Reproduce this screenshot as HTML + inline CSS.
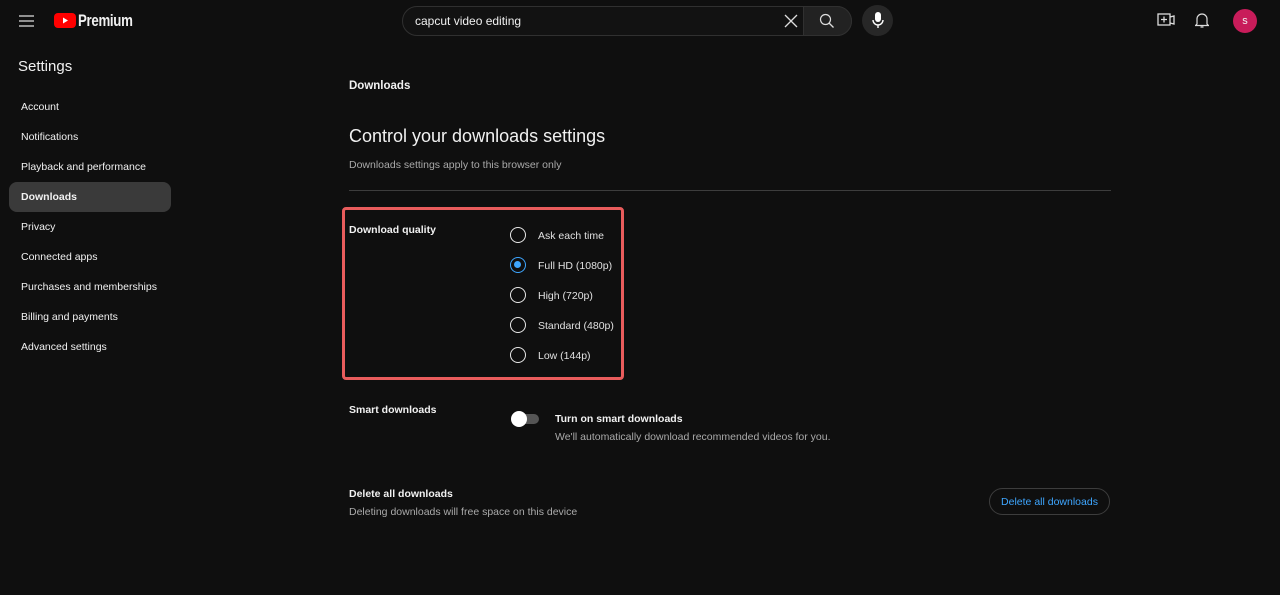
<!DOCTYPE html>
<html><head><meta charset="utf-8"><style>
*{margin:0;padding:0;box-sizing:border-box}
body{width:1280px;height:595px;background:#0f0f0f;color:#f1f1f1;font-family:"Liberation Sans",Arial,sans-serif;position:relative;overflow:hidden}
.a{position:absolute}
.t{font-size:10.5px;white-space:nowrap}
.nav{position:absolute;left:9px;width:162px;height:30px;border-radius:8px;font-size:10.5px;padding-left:12px;line-height:31px}
.radio{position:absolute;left:510px;width:16px;height:16px;border:1.5px solid #e8e8e8;border-radius:50%}
.rl{position:absolute;left:538px;font-size:10.5px;color:#e0e0e0}
.g{color:#aaa}
</style></head><body>
<svg class="a" style="left:19px;top:14px" width="16" height="14"><path d="M0 2h15M0 7h15M0 12h15" stroke="#ddd" stroke-width="1.3"/></svg>
<svg class="a" style="left:54px;top:13px" width="22" height="16"><rect width="22" height="15" rx="4" fill="#f00"/><path d="M9 4.5v6l5-3z" fill="#fff"/></svg>
<div class="a" style="left:78px;top:11px;font-size:17px;font-weight:bold;letter-spacing:-0.4px;transform:scaleX(0.78);transform-origin:left">Premium</div>
<div class="a" style="left:402px;top:6px;width:450px;height:30px;border:1px solid #303030;border-radius:16px;background:#121212"></div>
<div class="a" style="left:803px;top:6px;width:49px;height:30px;border:1px solid #303030;border-radius:0 16px 16px 0;background:#222"></div>
<div class="a t" style="left:415px;top:14px;font-size:12px">capcut video editing</div>
<svg class="a" style="left:784px;top:14px" width="14" height="14"><path d="M1 1l12 12M13 1L1 13" stroke="#ddd" stroke-width="1.3"/></svg>
<svg class="a" style="left:819px;top:13px" width="16" height="16"><circle cx="6.5" cy="6.5" r="5" stroke="#ddd" stroke-width="1.2" fill="none"/><path d="M10 10l4.5 4.5" stroke="#ddd" stroke-width="1.3"/></svg>
<div class="a" style="left:862px;top:5px;width:31px;height:31px;border-radius:50%;background:#272727"></div>
<svg class="a" style="left:872px;top:12px" width="12" height="17"><rect x="3" y="0" width="6" height="10" rx="3" fill="#fff"/><path d="M1 8a5 5 0 0010 0M6 13v3" stroke="#fff" stroke-width="1.4" fill="none"/></svg>
<svg class="a" style="left:1157px;top:13px" width="18" height="14"><rect x="1" y="1" width="12" height="11" stroke="#ddd" stroke-width="1.3" fill="none"/><path d="M13 4l4-1v8l-4-1M7 3.5v6M4 6.5h6" stroke="#ddd" stroke-width="1.3" fill="none"/></svg>
<svg class="a" style="left:1195px;top:12px" width="14" height="17"><path d="M2 12V7a5 5 0 0110 0v5l1.5 1.5h-13zM5.5 15h3" stroke="#ddd" stroke-width="1.2" fill="none"/></svg>
<div class="a" style="left:1233px;top:9px;width:24px;height:24px;border-radius:50%;background:#c81c5a;font-size:11px;text-align:center;line-height:24px">s</div>
<div class="a" style="left:18px;top:58px;font-size:15px">Settings</div>
<div class="nav" style="top:92px">Account</div>
<div class="nav" style="top:122px">Notifications</div>
<div class="nav" style="top:152px">Playback and performance</div>
<div class="nav" style="top:182px;background:#3a3a3a;font-weight:bold">Downloads</div>
<div class="nav" style="top:212px">Privacy</div>
<div class="nav" style="top:242px">Connected apps</div>
<div class="nav" style="top:272px">Purchases and memberships</div>
<div class="nav" style="top:302px">Billing and payments</div>
<div class="nav" style="top:332px">Advanced settings</div>
<div class="a" style="left:349px;top:80px;font-size:11.5px;font-weight:bold">Downloads</div>
<div class="a" style="left:349px;top:126px;font-size:18px">Control your downloads settings</div>
<div class="a t g" style="left:349px;top:159px">Downloads settings apply to this browser only</div>
<div class="a" style="left:349px;top:190px;width:762px;height:1px;background:#3d3d3d"></div>
<div class="a" style="left:342px;top:207px;width:282px;height:173px;border:3px solid #e85c5c;border-radius:4px"></div>
<div class="a t" style="left:349px;top:224px;font-weight:bold">Download quality</div>
<div class="radio" style="top:227px"></div><div class="rl" style="top:230px">Ask each time</div>
<div class="radio" style="top:257px;border-color:#3ea6ff"><div style="position:absolute;left:3px;top:3px;width:7px;height:7px;border-radius:50%;background:#3ea6ff"></div></div><div class="rl" style="top:260px">Full HD (1080p)</div>
<div class="radio" style="top:287px"></div><div class="rl" style="top:290px">High (720p)</div>
<div class="radio" style="top:317px"></div><div class="rl" style="top:320px">Standard (480p)</div>
<div class="radio" style="top:347px"></div><div class="rl" style="top:350px">Low (144p)</div>
<div class="a t" style="left:349px;top:404px;font-weight:bold">Smart downloads</div>
<div class="a" style="left:513px;top:414px;width:26px;height:10px;border-radius:5px;background:#555"></div>
<div class="a" style="left:511px;top:411px;width:16px;height:16px;border-radius:50%;background:#fff"></div>
<div class="a t" style="left:555px;top:413px;font-weight:bold">Turn on smart downloads</div>
<div class="a t g" style="left:555px;top:431px">We'll automatically download recommended videos for you.</div>
<div class="a t" style="left:349px;top:488px;font-weight:bold">Delete all downloads</div>
<div class="a t g" style="left:349px;top:506px">Deleting downloads will free space on this device</div>
<div class="a" style="left:989px;top:488px;width:121px;height:27px;border:1px solid #3d3d3d;border-radius:14px;color:#3ea6ff;font-size:10.5px;text-align:center;line-height:26px">Delete all downloads</div>
</body></html>
